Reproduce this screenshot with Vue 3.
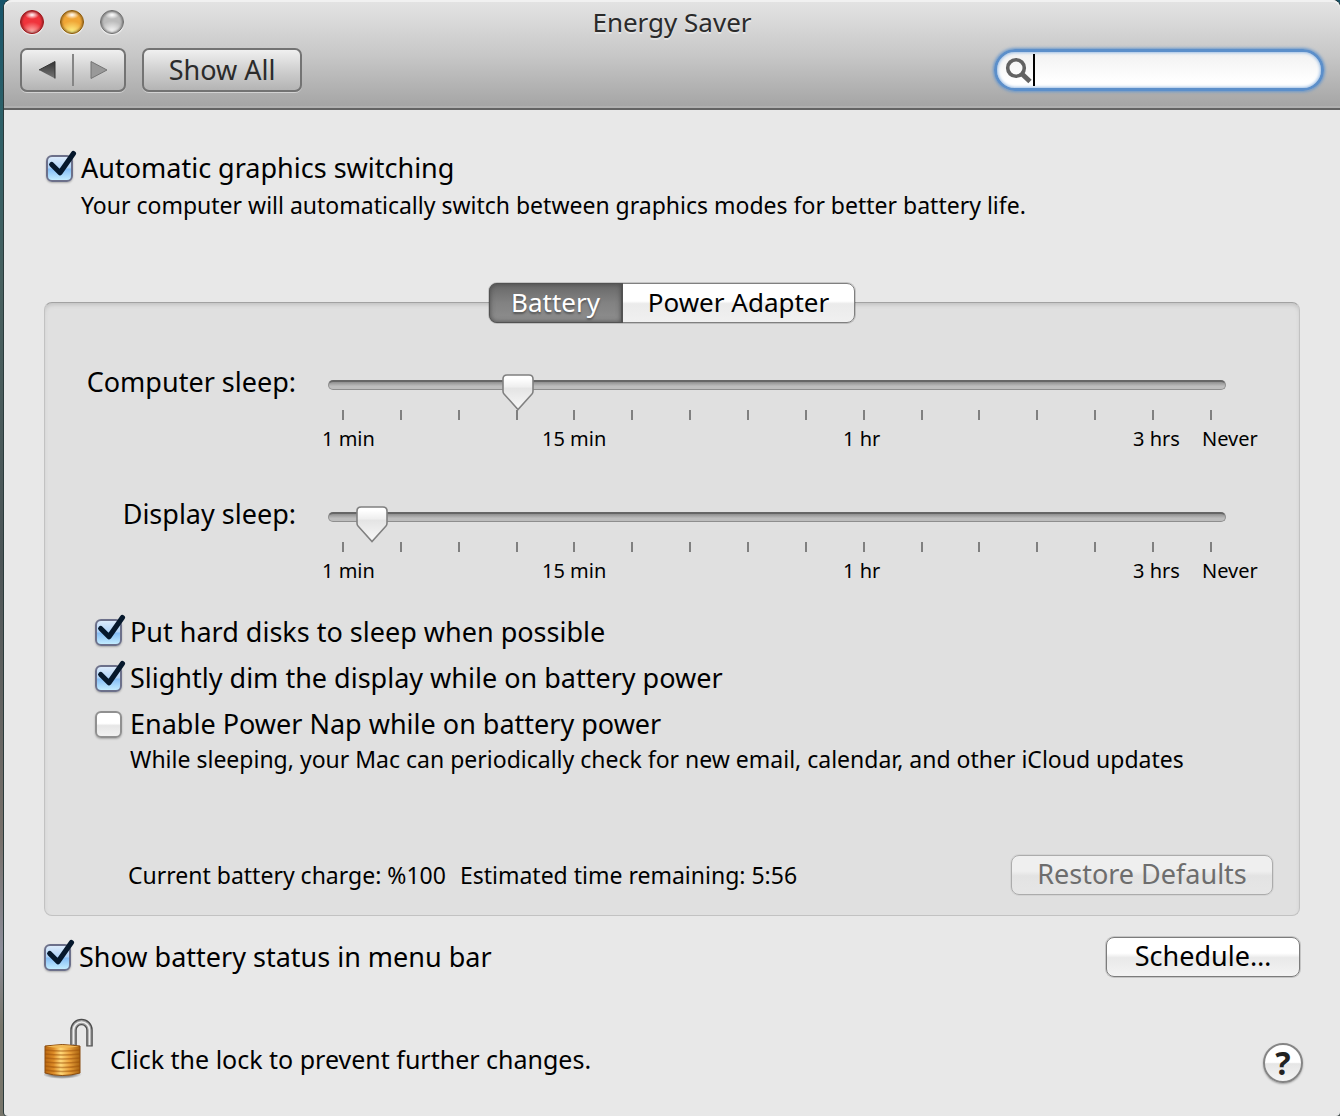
<script setup>
import { ref } from 'vue'

const query = ref('')
const graphics = ref(true)
const menuBar = ref(true)
const tab = ref('Battery')
const tabs = ['Battery', 'Power Adapter']
const scale = ['1 min', '15 min', '1 hr', '3 hrs', 'Never']
const sliders = ref([
  { id: 'computer', label: 'Computer sleep:', value: 3 },
  { id: 'display', label: 'Display sleep:', value: 0.47 }
])
const options = ref([
  { label: 'Put hard disks to sleep when possible', on: true },
  { label: 'Slightly dim the display while on battery power', on: true },
  { label: 'Enable Power Nap while on battery power', on: false }
])
</script>

<template>
  <div class="desktop">
    <main class="window">
      <header class="chrome">
        <div class="titlebar">
          <div class="lights">
            <button class="light red" aria-label="Close"></button>
            <button class="light amber" aria-label="Minimize"></button>
            <button class="light grey" aria-label="Zoom" disabled></button>
          </div>
          <h1>Energy Saver</h1>
        </div>
        <div class="toolbar">
          <div class="nav">
            <button aria-label="Back">
              <svg width="18" height="20" viewBox="0 0 18 20">
                <defs>
                  <linearGradient id="back" x1="0" y1="0" x2="0" y2="1">
                    <stop offset="0" stop-color="#333" />
                    <stop offset="1" stop-color="#777" />
                  </linearGradient>
                </defs>
                <path d="M1 10 17 1.500V18.500Z" fill="url(#back)" />
                <path d="M1 10 17 1.500V18.500" fill="none" stroke="#333" stroke-width="1" />
              </svg>
            </button>
            <i class="divider"></i>
            <button aria-label="Forward">
              <svg width="18" height="20" viewBox="0 0 18 20">
                <path d="M17 10 1 1.500V18.500Z" fill="#999" stroke="#757575" />
              </svg>
            </button>
          </div>
          <button class="show-all">Show All</button>
          <label class="search">
            <svg width="28" height="28" viewBox="0 0 28 28" fill="none" stroke="#626262" aria-hidden="true">
              <circle cx="11" cy="12" r="8.300" stroke-width="3.600" />
              <path d="m16.500 17.500 8.500 8" stroke-width="4.800" />
            </svg>
            <i class="caret"></i>
            <input v-model="query" type="text" aria-label="Search" />
          </label>
        </div>
      </header>

      <section class="body">
        <div class="graphics">
          <label class="check">
            <span class="box">
              <input v-model="graphics" type="checkbox" />
              <svg class="mark" viewBox="0 0 28 28"><path d="M5.500 13 13.500 21 26.500 2.500" /></svg>
            </span>
            Automatic graphics switching
          </label>
          <p class="note">Your computer will automatically switch between graphics modes for better battery life.</p>
        </div>

        <div class="tabs" role="tablist">
          <button
            v-for="name in tabs"
            :key="name"
            role="tab"
            :class="{ active: tab === name }"
            :aria-selected="tab === name"
            @click="tab = name"
          >{{ name }}</button>
        </div>

        <div class="panel">
          <div class="sliders">
            <div v-for="s in sliders" :key="s.id" class="slider">
              <label :for="s.id">{{ s.label }}</label>
              <div class="control">
                <input :id="s.id" v-model="s.value" type="range" min="0" max="15" step="any" />
                <div class="ticks"><i v-for="n in 16" :key="n"></i></div>
                <div class="scale"><span v-for="t in scale" :key="t">{{ t }}</span></div>
              </div>
            </div>
          </div>

          <div class="options">
            <label v-for="o in options" :key="o.label" class="check">
              <span class="box">
                <input v-model="o.on" type="checkbox" />
                <svg class="mark" viewBox="0 0 28 28"><path d="M5.500 13 13.500 21 26.500 2.500" /></svg>
              </span>
              {{ o.label }}
            </label>
            <p class="note">While sleeping, your Mac can periodically check for new email, calendar, and other iCloud updates</p>
          </div>

          <div class="status">
            <p><span>Current battery charge: %100</span><span>Estimated time remaining: 5:56</span></p>
            <button class="push restore" disabled>Restore Defaults</button>
          </div>
        </div>

        <div class="menu-row">
          <label class="check">
            <span class="box">
              <input v-model="menuBar" type="checkbox" />
              <svg class="mark" viewBox="0 0 28 28"><path d="M5.500 13 13.500 21 26.500 2.500" /></svg>
            </span>
            Show battery status in menu bar
          </label>
          <button class="push schedule">Schedule…</button>
        </div>
      </section>

      <footer class="footer">
        <button class="lock" aria-label="Lock">
          <svg width="50" height="65" viewBox="0 0 50 65">
            <defs>
              <linearGradient id="brass" x1="0" x2="1" y1="0" y2="0">
                <stop offset="0" stop-color="#b9660f" />
                <stop offset=".25" stop-color="#de8d28" />
                <stop offset=".45" stop-color="#ffd878" />
                <stop offset=".7" stop-color="#e9a03a" />
                <stop offset="1" stop-color="#a8620f" />
              </linearGradient>
              <radialGradient id="ground">
                <stop offset=".6" stop-color="#000" stop-opacity=".4" />
                <stop offset="1" stop-color="#000" stop-opacity="0" />
              </radialGradient>
            </defs>
            <ellipse cx="18" cy="56" rx="20" ry="5" fill="url(#ground)" />
            <g fill="none">
              <path d="M29.500 28V12A8 8 0 0 1 45.500 12V28.500" stroke="#4c4c4c" stroke-width="6.500" />
              <path d="M29.500 28V12A8 8 0 0 1 45.500 12V27.500" stroke="#a0a0a0" stroke-width="4" />
              <path d="M29.500 26V12A8 8 0 0 1 45.500 12V27" stroke="#ededed" stroke-width="1.600" />
            </g>
            <path d="M1 28 Q18 25 36 28V55Q18 60 1 55Z" fill="url(#brass)" stroke="#8a4c10" />
            <g fill="none" stroke="#9a4e08" stroke-opacity=".5" stroke-width="1.400">
              <path d="M1 32Q18 34 36 32M1 36Q18 38 36 36M1 40Q18 42 36 40M1 44Q18 46 36 44M1 48Q18 51 36 48M1 52Q18 55 36 52" />
            </g>
            <path d="M2 28.500Q18 26 35 28.500Q18 31 2 28.500" fill="#f0b855" />
          </svg>
        </button>
        <p>Click the lock to prevent further changes.</p>
        <button class="help" aria-label="Help">?</button>
      </footer>
    </main>
  </div>
</template>

<style>
body {
  margin: 0;
}
</style>

<style scoped>
* {
  box-sizing: border-box;
}

.desktop {
  min-height: 100vh;
  display: flex;
  padding-left: 4px;
  background: linear-gradient(#17546a, #2c6068 10%, #47605f 25%, #4c5557 50%, #77706a 75%, #8c8d99 85%, #77756a 92%, #77756a);
  font-family: "Noto Sans", "Open Sans", sans-serif;
  font-size: 27px;
  line-height: 32px;
  color: #000;
}

button,
input {
  margin: 0;
  padding: 0;
  border: 0;
  background: none;
  font: inherit;
  color: inherit;
}

p,
h1 {
  margin: 0;
  font-weight: 400;
  font-size: inherit;
}

.window {
  flex: 1;
  min-width: 0;
  border-radius: 8px 8px 4px 4px;
  background: #e8e8e8;
  box-shadow: 0 0 0 1px #2b3b3c;
}

.chrome {
  height: 110px;
  border-bottom: 2px solid #636363;
  border-radius: 8px 8px 0 0;
  background: linear-gradient(#e4e4e4, #c8c8c8 50%, #a4a4a4);
  box-shadow: inset 0 2px #f1f1f1, inset 0 -2px #b0b0b0;
  color: #2b2b2b;
}

.titlebar {
  display: grid;
  grid-template-columns: 1fr auto 1fr;
  align-items: center;
  height: 44px;
  padding: 0 16px;
}

.titlebar h1 {
  font-size: 26px;
  text-shadow: 0 2px rgba(255, 255, 255, .4);
}

.lights {
  display: flex;
  gap: 16px;
}

.light {
  width: 24px;
  height: 24px;
  border-radius: 50%;
  box-shadow: inset 0 0 2px 1px rgba(0, 0, 0, .35), 0 1px 1px rgba(255, 255, 255, .7);
}

.red {
  background: radial-gradient(ellipse 7px 4px at 50% 18%, #fff, transparent), radial-gradient(ellipse 11px 10px at 50% 95%, #ffb3ae, transparent), #f0343c;
  border: 1px solid #96161a;
}

.amber {
  background: radial-gradient(ellipse 7px 4px at 50% 18%, #fff, transparent), radial-gradient(ellipse 12px 11px at 50% 95%, #fff487, transparent), #f0a636;
  border: 1px solid #85560b;
}

.grey {
  background: radial-gradient(ellipse 7px 4px at 50% 18%, #fff, transparent), radial-gradient(ellipse 12px 11px at 50% 95%, #fafafa, transparent), #bcbcbc;
  border: 1px solid #6d6d6d;
}

.toolbar {
  display: flex;
  gap: 16px;
  padding: 4px 16px 0;
}

.nav,
.show-all {
  height: 44px;
  border: 2px solid #737373;
  border-radius: 7px;
  background: linear-gradient(#f0f0f0, #d0d0d0 50%, #b4b4b4);
  box-shadow: 0 1px rgba(255, 255, 255, .45);
}

.nav {
  display: flex;
  align-items: center;
  width: 106px;
}

.nav button {
  flex: 1;
  display: flex;
  justify-content: center;
}

.divider {
  width: 2px;
  height: 32px;
  background: #858585;
}

.show-all {
  width: 160px;
}

.search {
  display: flex;
  align-items: center;
  width: 330px;
  height: 42px;
  margin: 1px 0 0 auto;
  padding: 0 12px 0 8px;
  border: 3px solid #5c8fca;
  border-radius: 21px;
  background: linear-gradient(#f1f1f1, #fff 80%);
  box-shadow: 0 0 3px 1px #6a98cc, inset 0 0 3px 1px #9fc0e6;
}

.caret {
  width: 2px;
  height: 32px;
  background: #000;
}

.search input {
  flex: 1;
  min-width: 0;
  outline: 0;
}

.body {
  padding: 42px 40px 0;
}

.graphics {
  padding-left: 2px;
}

.check {
  display: flex;
  align-items: center;
  gap: 8px;
}

.box {
  position: relative;
  display: flex;
  width: 27px;
  height: 27px;
}

.box input {
  appearance: none;
  width: 27px;
  height: 27px;
  border: 2px solid #909090;
  border-radius: 6px;
  background: linear-gradient(#fff 45%, #e6e6e6 55%, #f2f2f2);
  box-shadow: 0 1px 2px rgba(0, 0, 0, .25);
}

.box input:checked {
  border-color: #6c708a;
  background: linear-gradient(#dcebfb, #aed2f8 48%, #85bdf5 52%, #c3ecff);
}

.mark {
  display: none;
  position: absolute;
  left: 0;
  top: -4px;
  width: 29px;
  height: 29px;
  overflow: visible;
  fill: none;
  stroke: #06182c;
  stroke-width: 5;
  stroke-linecap: round;
  stroke-linejoin: round;
  pointer-events: none;
}

.box input:checked + .mark {
  display: block;
}

.note {
  margin: 7px 0 0 35px;
  font-size: 23px;
  line-height: 28px;
}

.tabs {
  position: relative;
  display: flex;
  width: 366px;
  height: 40px;
  margin: 64px auto -21px;
  border: 1px solid #808080;
  border-radius: 8px;
  background: linear-gradient(#fff 45%, #ebebeb 52%, #f0f0f0);
  box-shadow: 0 0 0 1px rgba(0, 0, 0, .15);
  font-size: 26px;
}

.tabs button {
  flex: 1;
  padding-bottom: 2px;
}

.tabs button:first-child {
  flex: 0 0 134px;
  margin: -1px 0 -1px -1px;
  border-radius: 8px 0 0 8px;
}

.tabs .active {
  border: 1px solid #525252;
  border-right-width: 2px;
  background: linear-gradient(#686868, #828282 50%, #8e8e8e);
  box-shadow: inset 0 0 5px #4c4c4c;
  color: #fff;
  text-shadow: 0 2px 2px #555;
}

.panel {
  padding: 63px 26px 20px 50px;
  border: 1px solid #c2c2c2;
  border-top-color: #a2a2a2;
  border-radius: 8px;
  background: #e0e0e0;
  box-shadow: inset 0 3px 4px -1px #c2c2c2;
}

.sliders {
  display: grid;
  gap: 47px;
  padding-right: 47px;
}

.slider {
  display: grid;
  grid-template-columns: 201px 1fr;
  gap: 32px;
}

.slider label {
  display: flex;
  justify-content: flex-end;
  white-space: nowrap;
}

.control {
  padding-top: 14px;
}

.control input {
  appearance: none;
  display: block;
  width: 100%;
  height: 10px;
}

.control input::-webkit-slider-runnable-track {
  height: 10px;
  border: 1px solid #8e8e8e;
  border-top: 2px solid #666;
  border-radius: 5px;
  background: linear-gradient(#8f8f8f, #bdbdbd 60%);
}

.control input::-webkit-slider-thumb {
  appearance: none;
  width: 32px;
  height: 38px;
  margin-top: -9px;
  background: url("data:image/svg+xml,%3Csvg xmlns='http://www.w3.org/2000/svg' viewBox='1 0 32 38'%3E%3Cdefs%3E%3ClinearGradient id='g' x1='0' y1='0' x2='0' y2='1'%3E%3Cstop offset='.1' stop-color='%23fff'/%3E%3Cstop offset='.35' stop-color='%23eee'/%3E%3Cstop offset='.38' stop-color='%23e4e4e4'/%3E%3Cstop offset='1' stop-color='%23f8f8f8'/%3E%3C/linearGradient%3E%3C/defs%3E%3Cpath d='M6 2H28Q32 2 32 6V18Q32 20 31 21L17 36.500 3 21Q2 20 2 18V6Q2 2 6 2Z' fill='url(%23g)' stroke='%23808080' stroke-width='1.600'/%3E%3C/svg%3E") center / 100% 100%;
}

.ticks {
  display: flex;
  justify-content: space-between;
  margin: 20px 14px 7px;
}

.ticks i {
  width: 2px;
  height: 10px;
  background: #808080;
}

.scale {
  display: grid;
  grid-template-columns: 220fr 301fr 290fr 69fr 56fr;
  margin: 0 -32px 0 -6px;
  font-size: 20px;
  line-height: 24px;
  white-space: nowrap;
}

.options {
  display: grid;
  gap: 14px;
  margin-top: 33px;
}

.options .note {
  margin-top: -9px;
}

.status {
  display: flex;
  align-items: center;
  justify-content: space-between;
  margin-top: 82px;
  padding-left: 33px;
  font-size: 23px;
}

.status p {
  display: flex;
  gap: 14px;
}

.push {
  height: 40px;
  padding-bottom: 2px;
  border: 1px solid #7c7c7c;
  border-radius: 8px;
  background: linear-gradient(#fff 40%, #e9e9e9 52%, #f3f3f3);
  box-shadow: 0 0 0 1px rgba(0, 0, 0, .15);
  font-size: 27px;
}

.restore {
  width: 262px;
  border-color: #acacac;
  background: linear-gradient(#efefef 40%, #e3e3e3 52%, #e6e6e6);
  box-shadow: 0 0 0 1px rgba(0, 0, 0, .05);
  color: #6d6d6d;
}

.schedule {
  width: 194px;
}

.menu-row {
  display: flex;
  align-items: center;
  justify-content: space-between;
  margin-top: 21px;
}

.footer {
  display: flex;
  align-items: flex-end;
  padding: 41px 37px 32px 40px;
}

.footer p {
  margin-left: 16px;
  padding-bottom: 8px;
  font-size: 25px;
}

.lock {
  display: flex;
}

.help {
  width: 40px;
  height: 40px;
  margin-left: auto;
  border: 2px solid #858585;
  border-radius: 50%;
  background: linear-gradient(#fff 48%, #e6e6e6 52%, #f5f5f5);
  box-shadow: 0 1px 2px rgba(0, 0, 0, .3);
  color: #222;
  font-size: 32px;
  font-weight: 700;
}
</style>
